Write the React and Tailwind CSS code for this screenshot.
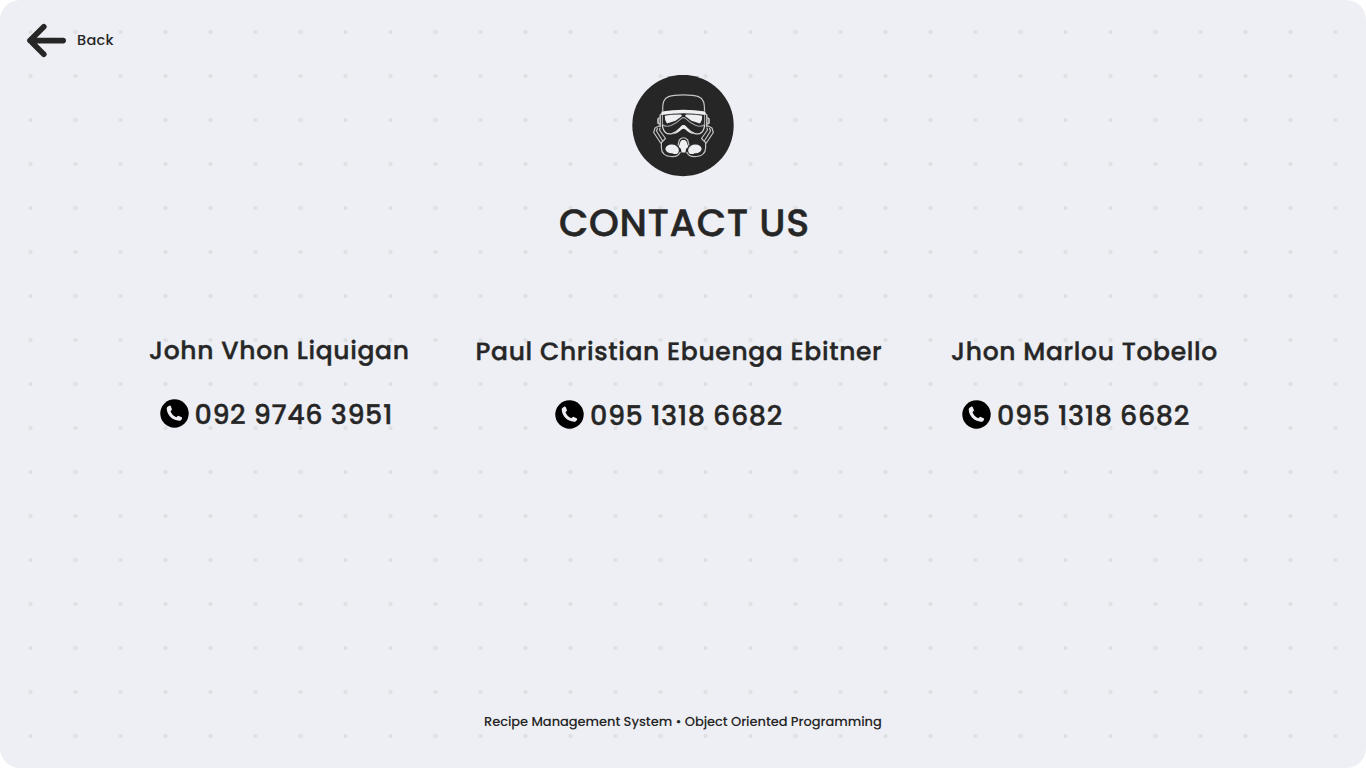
import React from "react";

const font =
  "font-['Poppins','Inter',sans-serif] font-medium whitespace-nowrap [text-rendering:geometricPrecision]";

function BackArrow() {
  return (
    <svg className="h-[35px] w-[41px] shrink-0" viewBox="0 0 41 35" fill="none" stroke="#262626" strokeWidth="5.6" strokeLinecap="round" strokeLinejoin="round">
      <path d="M37.2 17.6H4M17.8 3.8L4 17.6L17.8 31.2" />
    </svg>
  );
}

function PhoneIcon() {
  return (
    <svg className="size-[29px] shrink-0" viewBox="0 0 29 29">
      <circle cx="14.5" cy="14.5" r="14.2" fill="#000" />
      <path
        d="M7.6 7.7L9.6 6.6Q10.3 6.4 10.7 7.1L11.9 9.9Q12.1 10.6 11.6 11L10.5 12.2Q12.2 16.5 16.4 18.2L17.7 17.1Q18.2 16.7 18.8 17L21.6 18.3Q22.3 18.7 22.1 19.4L21.2 21.1Q20.7 22 19.2 21.8C12 21 7.3 16.3 6.7 9.7Q6.6 8.3 7.6 7.7Z"
        fill="#eeeff4"
      />
    </svg>
  );
}

function HelmetLogo() {
  return (
    <svg className="size-[102px]" viewBox="0 0 102 102" fill="none">
      <circle cx="51" cy="50.5" r="50.7" fill="#262626" />
      <g stroke="#c4c4c6" strokeWidth="1.2" strokeLinejoin="round">
        <path d="M30.7 36C30.6 28 31.5 23.5 36.5 21.6C43 19.3 60 19.3 66.5 21.6C71.5 23.5 72.6 28 72.5 36" />
        <path d="M30 38.5L28.2 40V52M73 38.5L74.8 40V52" strokeWidth="1.5" />
        <path d="M27.6 42.5L26 44V48L27.8 49M75.4 42.5L77 44V48L75.2 49" strokeWidth="1.7" />
        <path d="M27.8 50.5L23 53L21.7 57.5L29 68.5M25.5 53L24.5 56L31 66.5M28.2 52.5L27.5 55L33.5 63.5L29.5 67.5" />
        <path d="M75.2 50.5L80 53L81.3 57.5L74 68.5M77.5 53L78.5 56L72 66.5M74.8 52.5L75.5 55L69.5 63.5L73.5 67.5" />
        <path d="M29.4 67V73C29.6 78 33 81 38.5 81.5C43.5 82 47.2 80.2 48.3 77M54.7 77C55.8 80.2 59.5 82 64.5 81.5C70 81 73.4 78 73.6 73V67" />
        <path d="M46 70.5L47.3 65Q51.5 60.5 55.7 65L57 70.5" />
      </g>
      <path d="M29.5 36.6Q51.5 33 73.5 36.6V40Q51.5 36.7 29.5 40Z" fill="#f0f0f2" />
      <path d="M32.8 40.8Q40 39.3 49 39.6L50 41L43.6 45.8L35 48.6Q32.4 45 32.8 40.8Z" fill="#eeeff3" />
      <path d="M70.2 40.8Q63 39.3 54 39.6L53 41L59.4 45.8L68 48.6Q70.6 45 70.2 40.8Z" fill="#eeeff3" />
      <path d="M30.4 40V49.5Q34 52.8 40 50Q45 47.8 49.3 43.6Q51.5 41.7 53.7 43.6Q58 47.8 63 50Q69 52.8 72.6 49.5V40" stroke="#a8a8ab" strokeWidth="1.1" />
      <path d="M30.3 50C31.2 57 34.5 60 40 58.6C44.5 57.4 47 54.2 49.2 52Q51.5 49.7 53.8 52C56 54.2 58.5 57.4 63 58.6C68.5 60 71.8 57 72.7 50" stroke="#d6d6d8" strokeWidth="1.3" />
      <path d="M40.5 59.3C45 57.6 47 53.6 49 51.4Q51.5 48.8 54 51.4C56 53.6 58 57.6 62.5 59.3C58.5 59.2 55.5 56.5 53.4 54.6Q51.5 53 49.6 54.6C47.5 56.5 44.5 59.2 40.5 59.3Z" fill="#f0f0f2" />
      <ellipse cx="39.7" cy="73.8" rx="6.3" ry="4.4" fill="#eeeff3" />
      <circle cx="43.2" cy="75.4" r="3.6" fill="#eeeff3" />
      <ellipse cx="63.3" cy="73.8" rx="6.3" ry="4.4" fill="#eeeff3" />
      <circle cx="59.8" cy="75.4" r="3.6" fill="#eeeff3" />
      <path d="M48.5 66.5L50 65H53L54.5 66.5L56.3 71.8L54 74L53.5 77.6H49.5L49 74L46.7 71.8Z" fill="#f0f0f2" />
    </svg>
  );
}

function Contact({ name, phone, className, phoneRowClass }) {
  return (
    <section className={className}>
      <h2 className="h-8 text-[25px] leading-8 tracking-[0.65px]">{name}</h2>
      <div className={`mt-8 flex h-[29px] items-center ${phoneRowClass}`}>
        <PhoneIcon />
        <span className="pt-[3px] pl-[6px] text-[27px] leading-[29px] tracking-[0.57px]">{phone}</span>
      </div>
    </section>
  );
}

export default function App() {
  return (
    <div className="h-[769px] w-[1366px] overflow-hidden bg-white">
      <main
        className={`flex h-[768px] flex-col rounded-[20px] bg-[#eeeff4] bg-[radial-gradient(circle_at_22.5px_22px,#e0e1e5_1.8px,transparent_2.5px)] bg-[size:45px_44px] bg-[position:8px_10px] text-[#262626] ${font}`}
      >
        <header className="flex h-[75px] shrink-0 items-start pt-[23px] pl-[26px]">
          <button className="flex items-center">
            <BackArrow />
            <span className="mb-px ml-[10px] text-[14.5px] leading-5 tracking-[0.25px]">Back</span>
          </button>
        </header>
        <div className="flex h-[102px] shrink-0 justify-center">
          <HelmetLogo />
        </div>
        <h1 className="mt-[23px] ml-[559px] h-12 shrink-0 text-[38px] leading-[48px] tracking-[0.65px] [-webkit-text-stroke:0.5px_#262626]">CONTACT US</h1>
        <div className="mt-[87px] flex h-24 shrink-0 pl-[149px] [-webkit-text-stroke:0.4px_#262626]">
          <Contact name="John Vhon Liquigan" phone="092 9746 3951" className="w-[326.5px]" phoneRowClass="pl-[10.5px]" />
          <Contact name="Paul Christian Ebuenga Ebitner" phone="095 1318 6682" className="w-[475.5px] pt-px" phoneRowClass="pl-[79.5px]" />
          <Contact name="Jhon Marlou Tobello" phone="095 1318 6682" className="w-[300px] pt-px" phoneRowClass="pl-[11px]" />
        </div>
        <footer className="mt-auto mb-[36px] ml-[484px] h-5 text-[13px] leading-5 tracking-[-0.035px]">Recipe Management System • Object Oriented Programming</footer>
      </main>
    </div>
  );
}
